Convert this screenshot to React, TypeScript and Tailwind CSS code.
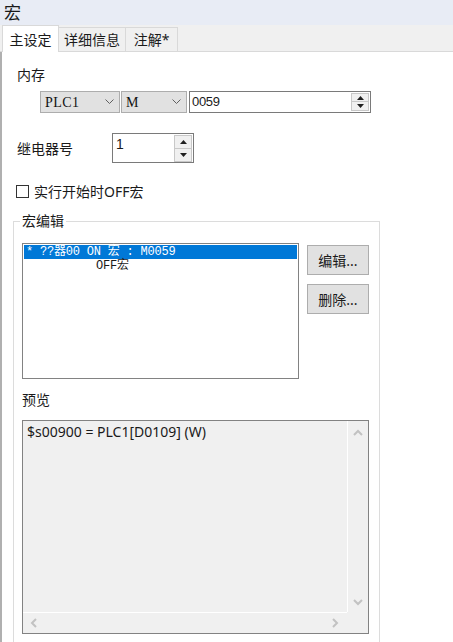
import React from "react";

const ui = { fontFamily: '"Noto Sans", "Noto Sans CJK SC", sans-serif' };
const mono = { fontFamily: '"Liberation Mono", "Noto Sans CJK SC", monospace' };
const serif = { fontFamily: '"Liberation Serif", "Noto Sans CJK SC", serif' };

function Chevron() {
  return (
    <svg width="9" height="6" viewBox="0 0 9 6" className="shrink-0">
      <polyline points="0.5,0.5 4.5,4.5 8.5,0.5" fill="none" stroke="#606060" strokeWidth="1" />
    </svg>
  );
}

function Spinner({ h }: { h: number }) {
  const half = h / 2;
  return (
    <div className="flex flex-col" style={{ height: h }}>
      <div className="flex items-center justify-center border border-[#c8c8c8] bg-[#f0f0f0] w-[18px]" style={{ height: half }}>
        <svg width="7" height="4" viewBox="0 0 7 4"><polygon points="0,4 7,4 3.5,0" fill="#202020" /></svg>
      </div>
      <div className="flex items-center justify-center border border-t-0 border-[#c8c8c8] bg-[#f0f0f0] w-[18px]" style={{ height: half }}>
        <svg width="7" height="4" viewBox="0 0 7 4"><polygon points="0,0 7,0 3.5,4" fill="#202020" /></svg>
      </div>
    </div>
  );
}

function ScrollArrow({ dir }: { dir: "up" | "down" | "left" | "right" }) {
  const pts: Record<string, string> = {
    up: "1,6 5,2 9,6",
    down: "1,2 5,6 9,2",
    left: "6,1 2,5 6,9",
    right: "2,1 6,5 2,9",
  };
  const vert = dir === "up" || dir === "down";
  return (
    <svg width={vert ? 10 : 8} height={vert ? 8 : 10} viewBox={vert ? "0 0 10 8" : "0 0 8 10"}>
      <polyline points={pts[dir]} fill="none" stroke="#c2c2c2" strokeWidth="2" />
    </svg>
  );
}

export default function App() {
  return (
    <div className="w-[453px] h-[642px] overflow-hidden bg-white flex flex-col text-[14px] text-[#1a1a1a]" style={ui}>
      {/* Title */}
      <div className="h-[25px] bg-[#e8ecf5] pl-[4px] flex items-center text-[17px] leading-none shrink-0">宏</div>
      {/* Tabs */}
      <div className="h-[27px] bg-[#f0f0f0] border-b border-[#d9d9d9] flex items-end pl-[2px] shrink-0">
        <div className="h-[27px] -mb-px w-[57px] bg-white border border-b-0 border-[#d9d9d9] flex items-center justify-center">主设定</div>
        <div className="h-[24px] w-[67px] border border-l-0 border-b-0 border-[#d9d9d9] flex items-center justify-center">详细信息</div>
        <div className="h-[24px] w-[52px] border border-l-0 border-b-0 border-[#d9d9d9] flex items-center justify-center">注解*</div>
      </div>
      {/* Content */}
      <div className="flex-1 border-l-2 border-[#b0b0b0] flex flex-col">
        <div className="ml-[15px] mt-[13px] h-[20px] leading-[20px]">内存</div>
        <div className="ml-[38px] mt-[6px] flex items-center">
          <div className="w-[80px] h-[22px] bg-[#e1e1e1] border border-[#adadad] flex items-center justify-between pl-[4px] pr-[5px]">
            <span className="text-[14px] font-medium text-[#111] tracking-[0.4px]" style={serif}>PLC1</span>
            <Chevron />
          </div>
          <div className="ml-[1px] w-[66px] h-[22px] bg-[#e1e1e1] border border-[#adadad] flex items-center justify-between pl-[4px] pr-[5px]">
            <span className="text-[14px] font-medium text-[#111]" style={serif}>M</span>
            <Chevron />
          </div>
          <div className="ml-[2px] w-[182px] h-[22px] border border-[#7a7a7a] flex items-center justify-between pl-[2px] pr-[1px]">
            <span className="text-[13px] tracking-[-0.3px]" style={{ fontFamily: '"Liberation Sans", sans-serif' }}>0059</span>
            <Spinner h={18} />
          </div>
        </div>
        <div className="ml-[15px] mt-[20px] flex items-center">
          <div className="w-[95px]">继电器号</div>
          <div className="w-[82px] h-[30px] border border-[#7a7a7a] flex justify-between pl-[3px] pr-[1px] pt-[1px]">
            <span className="text-[14px] leading-[18px]" style={{ fontFamily: '"Liberation Sans", sans-serif' }}>1</span>
            <Spinner h={27} />
          </div>
        </div>
        <div className="ml-[14px] mt-[18px] h-[20px] flex items-center">
          <div className="w-[13px] h-[13px] border border-[#333] bg-white"></div>
          <span className="ml-[5px]">实行开始时OFF宏</span>
        </div>
        {/* Group box */}
        <div className="relative ml-[11px] mt-[20px] w-[367px] border border-[#dcdcdc] pb-[20px]">
          <div className="absolute left-[6px] -top-[11px] bg-white px-[2px] h-[20px] leading-[20px]">宏编辑</div>
          <div className="flex ml-[8px] mt-[21px]">
            <div className="w-[277px] h-[136px] border border-[#828282] p-[1px]">
              <div className="h-[14px] bg-[#0078d7] text-white text-[12px] leading-[14px] whitespace-pre tracking-[-0.2px] pl-[2px]" style={mono}>* ??器00 ON 宏 : M0059</div>
              <div className="h-[15px] text-[12px] leading-[15px] whitespace-pre tracking-[-0.2px] pl-[2px]" style={mono}>          OFF宏</div>
            </div>
            <div className="ml-[8px] mt-[2px] flex flex-col gap-[9px]">
              <div className="w-[62px] h-[30px] bg-[#e1e1e1] border border-[#adadad] flex items-center justify-center">编辑...</div>
              <div className="w-[62px] h-[30px] bg-[#e1e1e1] border border-[#adadad] flex items-center justify-center">删除...</div>
            </div>
          </div>
          <div className="ml-[8px] mt-[11px] h-[20px] leading-[20px]">预览</div>
          <div className="ml-[8px] mt-[10px] w-[347px] h-[214px] border border-[#828282] bg-[#f0f0f0] grid grid-cols-[324px_1px_20px] grid-rows-[191px_1px_20px]">
            <div className="pl-[4px] pt-[1px] text-[14px] leading-[20px] text-[#1a1a1a]">$s00900 = PLC1[D0109] (W)</div>
            <div className="bg-white"></div>
            <div className="flex flex-col items-center justify-between pt-[8px] pb-[6px]">
              <ScrollArrow dir="up" />
              <ScrollArrow dir="down" />
            </div>
            <div className="bg-white"></div>
            <div></div>
            <div></div>
            <div className="flex items-center justify-between pl-[7px] pr-[8px]">
              <ScrollArrow dir="left" />
              <ScrollArrow dir="right" />
            </div>
            <div></div>
            <div></div>
          </div>
        </div>
      </div>
    </div>
  );
}
